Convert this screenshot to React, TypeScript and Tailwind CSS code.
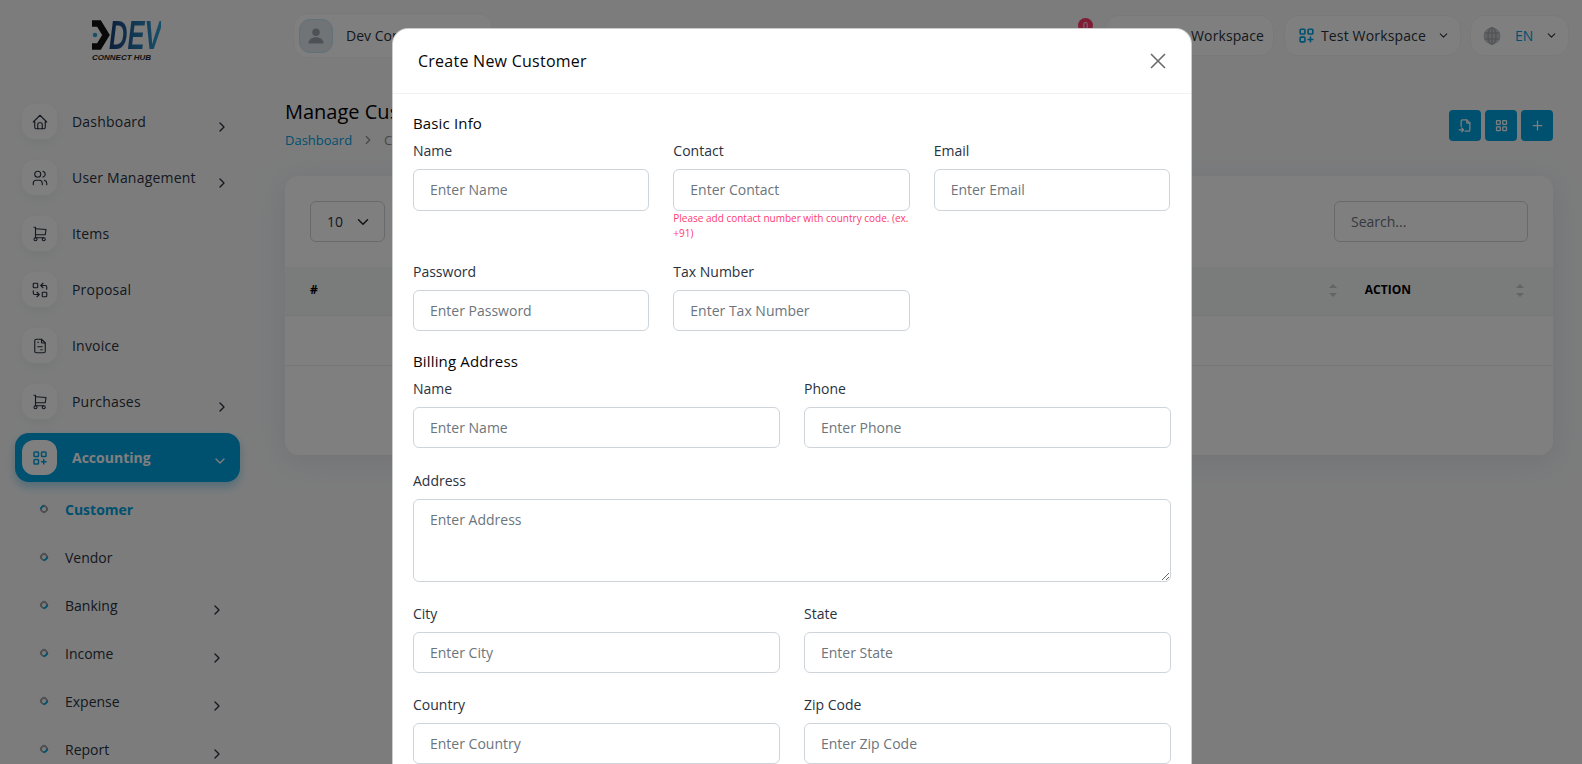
import { ReactNode } from 'react'
import {
  TbChevronDown,
  TbChevronRight,
  TbFileImport,
  TbFileInvoice,
  TbHome,
  TbLayoutGrid,
  TbLayoutGridAdd,
  TbPlus,
  TbReplace,
  TbShoppingCart,
  TbUsers,
} from 'react-icons/tb'

const mainMenu = [
  { label: 'Dashboard', icon: <TbHome />, arrow: true },
  { label: 'User Management', icon: <TbUsers />, arrow: true },
  { label: 'Items', icon: <TbShoppingCart />, arrow: false },
  { label: 'Proposal', icon: <TbReplace />, arrow: false },
  { label: 'Invoice', icon: <TbFileInvoice />, arrow: false },
  { label: 'Purchases', icon: <TbShoppingCart />, arrow: true },
]

const subMenu = [
  { label: 'Customer', active: true, arrow: false },
  { label: 'Vendor', active: false, arrow: false },
  { label: 'Banking', active: false, arrow: true },
  { label: 'Income', active: false, arrow: true },
  { label: 'Expense', active: false, arrow: true },
  { label: 'Report', active: false, arrow: true },
]

const Logo = () => (
  <div className="flex h-[42px] w-[72px] flex-col">
    <div className="flex h-[30px] items-start">
      <svg viewBox="0 0 20 30" className="h-[30px] w-[20px] shrink-0">
        <path d="M0 3.5H7L14 15L7 26.5H0" fill="none" stroke="#111" strokeWidth="6.5" />
        <circle cx="3" cy="15" r="2.2" fill="#2a9fd6" />
      </svg>
      <span className="-ml-[3px] origin-left scale-x-[0.64] bg-[linear-gradient(90deg,#1b3f78,#2f9fd4)] bg-clip-text text-[40px] leading-[30px] font-bold text-transparent italic [font-family:'Liberation_Sans',sans-serif]">
        DEV
      </span>
    </div>
    <span className="mt-[3px] text-[8px] leading-[9px] font-bold whitespace-nowrap text-[#222] italic [font-family:'Liberation_Sans',sans-serif]">
      CONNECT HUB
    </span>
  </div>
)

const Sidebar = () => (
  <aside className="flex w-[285px] shrink-0 flex-col">
    <div className="flex h-[104px] shrink-0 justify-start pt-[20px] pl-[92px]">
      <Logo />
    </div>
    <nav className="flex shrink-0 flex-col">
      {mainMenu.map((item) => (
        <div key={item.label} className="mb-[21px] flex h-[35px] shrink-0 items-start pl-[22px]">
          <span className="flex h-[35px] w-[35px] items-center justify-center rounded-[12px] bg-white text-[18px] text-[#293240] shadow-[0_4px_12px_rgba(0,0,0,0.05)] [&_svg]:stroke-[1.5]">
            {item.icon}
          </span>
          <span className="mt-[7px] ml-[15px] text-[14px] leading-[21px] font-medium tracking-[0.2px] text-[#293240]">
            {item.label}
          </span>
          {item.arrow && (
            <TbChevronRight className="absolute left-[214px] mt-[15px] text-[16px] text-[#293240]" />
          )}
        </div>
      ))}
      <div className="relative -mt-[7px] ml-[15px] flex h-[49px] w-[225px] shrink-0 items-center rounded-[14px] bg-[#00a0de] pl-[7px] shadow-[0_5px_10px_rgba(0,160,222,0.35)]">
        <span className="flex h-[35px] w-[35px] items-center justify-center rounded-[12px] bg-white text-[18px] text-[#00a0de]">
          <TbLayoutGridAdd />
        </span>
        <span className="ml-[15px] text-[14px] leading-[21px] font-bold text-white">Accounting</span>
        <TbChevronDown className="absolute top-[20px] left-[197px] text-[16px] text-white" />
      </div>
      <div className="mt-[3px] flex shrink-0 flex-col">
        {subMenu.map((item) => (
          <div key={item.label} className="relative flex h-[48px] shrink-0 items-center pl-[40px]">
            <span
              className={`-mt-[1px] h-[8px] w-[8px] rounded-full border-[2px] border-[#9b9ea3] border-b-[#00a0de] ${item.active ? 'rotate-[135deg]' : '-rotate-45'}`}
            />
            <span
              className={`ml-[17px] text-[14px] leading-[21px] ${item.active ? 'font-bold text-[#00a0de]' : 'font-medium text-[#293240]'}`}
            >
              {item.label}
            </span>
            {item.arrow && (
              <TbChevronRight className="absolute top-[21px] left-[209px] text-[16px] text-[#293240]" />
            )}
          </div>
        ))}
      </div>
    </nav>
  </aside>
)

const Pill = ({ className, children }: { className: string; children: ReactNode }) => (
  <div className={`flex h-[41px] items-center rounded-[14px] border border-[#f1f2f3] bg-white ${className}`}>
    {children}
  </div>
)

const Header = () => (
  <header className="flex h-[72px] shrink-0 items-start pt-[15px] pr-[13px] pl-[8px]">
    <div className="flex h-[45px] w-[200px] -translate-y-[2px] items-center rounded-[14px] border border-[#f1f2f3] bg-white pl-[5px]">
      <span className="flex h-[34px] w-[34px] items-center justify-center rounded-[11px] border border-[#bfe3f2] bg-[#e3e8ec]">
        <svg viewBox="0 0 24 24" className="h-[20px] w-[20px]">
          <circle cx="12" cy="7.5" r="4.5" fill="#9aa4ad" />
          <path d="M3 21c0-5 4-7.5 9-7.5s9 2.5 9 7.5z" fill="#9aa4ad" />
        </svg>
      </span>
      <span className="ml-[13px] text-[14px] leading-[21px] font-medium whitespace-nowrap text-[#293240]">
        Dev Connect
      </span>
    </div>
    <div className="relative ml-auto">
      <span className="absolute top-[3px] left-[-27px] flex h-[15px] w-[15px] items-center justify-center rounded-full bg-[#ff3a6e] text-[9px] font-medium text-white">
        0
      </span>
    </div>
    <Pill className="w-[169px] justify-end pr-[9px]">
      <span className="text-[14px] font-medium tracking-[0.1px] text-[#293240]">Workspace</span>
    </Pill>
    <Pill className="ml-[10px] w-[177px] pl-[12px]">
      <TbLayoutGridAdd className="text-[19px] text-[#00a0de]" />
      <span className="ml-[5px] text-[14px] font-medium tracking-[0.15px] whitespace-nowrap text-[#293240]">
        Test Workspace
      </span>
      <TbChevronDown className="ml-[11px] text-[13px] text-[#293240]" />
    </Pill>
    <Pill className="ml-[9px] w-[99px] pl-[12px]">
      <svg viewBox="0 0 18 18" className="h-[18px] w-[18px]">
        <circle cx="9" cy="9" r="8.5" fill="#c4c7cb" />
        <g fill="none" stroke="#9da1a6" strokeWidth="1">
          <ellipse cx="9" cy="9" rx="4" ry="8.5" />
          <path d="M9 .5v17M1.5 6h15M1.5 12h15" />
        </g>
      </svg>
      <span className="ml-[14px] text-[14px] font-medium text-[#00a0de]">EN</span>
      <TbChevronDown className="ml-[12px] text-[13px] text-[#293240]" />
    </Pill>
  </header>
)

const SortArrows = () => (
  <span className="flex flex-col items-center gap-[5px]">
    <span className="h-0 w-0 border-x-[4px] border-b-[4px] border-x-transparent border-b-[#c6c8cb]" />
    <span className="h-0 w-0 border-x-[4px] border-t-[4px] border-x-transparent border-t-[#c6c8cb]" />
  </span>
)

const ActionButton = ({ children }: { children: ReactNode }) => (
  <span className="flex h-[31px] w-[32px] items-center justify-center rounded-[4px] bg-[#00a0de] text-[15px] text-white">
    {children}
  </span>
)

const CustomerPage = () => (
  <main className="flex min-w-0 flex-1 flex-col">
    <Header />
    <div className="shrink-0 pr-[29px]">
      <div className="flex h-[104px] items-start justify-between">
        <div className="pt-[25px]">
          <h1 className="text-[20px] leading-[30px] font-medium whitespace-nowrap text-black">Manage Customer</h1>
          <p className="mt-[3px] flex items-center text-[13px] leading-[20px]">
            <span className="text-[#00a0de]">Dashboard</span>
            <TbChevronRight className="mx-[9px] text-[14px] text-[#8a8f96]" />
            <span className="text-[#8a8f96]">Customer</span>
          </p>
        </div>
        <div className="flex gap-[4px] pt-[38px]">
          <ActionButton>
            <TbFileImport />
          </ActionButton>
          <ActionButton>
            <TbLayoutGrid />
          </ActionButton>
          <ActionButton>
            <TbPlus />
          </ActionButton>
        </div>
      </div>
      <section className="h-[279px] rounded-[14px] bg-white shadow-[0_6px_30px_rgba(182,186,203,0.3)]">
        <div className="flex h-[91px] items-start justify-between pt-[25px] pr-[25px] pl-[25px]">
          <div className="flex h-[41px] w-[75px] items-center rounded-[6px] border border-[#ced4da] pl-[16px] text-[14px] text-[#293240]">
            10
            <TbChevronDown className="ml-[11px] text-[18px] text-[#222]" />
          </div>
          <div className="flex h-[41px] w-[194px] items-center rounded-[6px] border border-[#ced4da] pl-[16px] text-[14px] text-[#6b7280]">
            Search...
          </div>
        </div>
        <div className="flex h-[49px] items-center justify-between border-b border-[#eceef0] bg-[#f5f6f7] pr-[29px] pb-[2px] pl-[25px] text-[12px] leading-[18px] font-bold text-black">
          <span>#</span>
          <div className="flex items-center">
            <SortArrows />
            <span className="mr-[105px] ml-[28px]">ACTION</span>
            <SortArrows />
          </div>
        </div>
        <div className="h-[50px] border-b border-[#eceef0]" />
      </section>
    </div>
  </main>
)

const Field = ({
  label,
  placeholder,
  hint,
  className,
}: {
  label: string
  placeholder: string
  hint?: string
  className?: string
}) => (
  <div className={className}>
    <label className="mb-[8px] block text-[14px] leading-[21px] font-medium text-[#293240]">{label}</label>
    <input
      readOnly
      placeholder={placeholder}
      className="h-[41.5px] w-full rounded-[6px] border border-[#ced4da] bg-white px-[16px] text-[14px] outline-none placeholder:text-[#6c757d]"
    />
    {hint && <p className="mt-[0.5px] text-[10px] leading-[14.5px] text-[#ff3a6e]">{hint}</p>}
  </div>
)

const SectionTitle = ({ children }: { children: ReactNode }) => (
  <h6 className="text-[15px] leading-[21px] font-medium tracking-[0.15px] text-[#060606]">{children}</h6>
)

const CustomerModal = () => (
  <div className="absolute inset-0 overflow-hidden bg-[rgba(0,0,0,0.5)]">
    <div className="mt-[28px] ml-[392px] w-[800px] rounded-[16px] border border-black/20 bg-white">
      <div className="flex h-[65px] items-center justify-between border-b border-[#f1f1f1] pr-[25px] pl-[25px]">
        <h5 className="text-[16px] leading-[24px] font-medium tracking-[0.25px] text-[#060606]">
          Create New Customer
        </h5>
        <svg viewBox="0 0 16 16" className="h-[16px] w-[16px]">
          <path d="M1 1l14 14M15 1L1 15" fill="none" stroke="#6b6b6b" strokeWidth="1.6" />
        </svg>
      </div>
      <form className="px-[20px] pt-[19px] pb-[120px]">
        <SectionTitle>Basic Info</SectionTitle>
        <div className="mt-[6px] grid grid-cols-3 gap-x-[24px] gap-y-[20.5px] pr-[1px]">
          <Field label="Name" placeholder="Enter Name" />
          <Field
            label="Contact"
            placeholder="Enter Contact"
            hint="Please add contact number with country code. (ex. +91)"
          />
          <Field label="Email" placeholder="Enter Email" />
          <Field label="Password" placeholder="Enter Password" />
          <Field label="Tax Number" placeholder="Enter Tax Number" />
        </div>
        <div className="mt-[19.5px]">
          <SectionTitle>Billing Address</SectionTitle>
        </div>
        <div className="mt-[6px] grid grid-cols-2 gap-x-[24px] gap-y-[21px]">
          <Field label="Name" placeholder="Enter Name" />
          <Field label="Phone" placeholder="Enter Phone" />
          <div className="col-span-2 mt-[0.5px]">
            <label className="mb-[8px] block text-[14px] leading-[21px] font-medium text-[#293240]">Address</label>
            <textarea
              readOnly
              placeholder="Enter Address"
              className="block h-[83px] w-full rounded-[6px] border border-[#ced4da] bg-white px-[16px] py-[9px] text-[14px] outline-none placeholder:text-[#6c757d]"
            />
          </div>
          <Field label="City" placeholder="Enter City" />
          <Field label="State" placeholder="Enter State" />
          <Field label="Country" placeholder="Enter Country" className="-mt-[0.5px]" />
          <Field label="Zip Code" placeholder="Enter Zip Code" className="-mt-[0.5px]" />
        </div>
      </form>
    </div>
  </div>
)

const App = () => (
  <div className="relative flex h-[764px] overflow-hidden bg-[#f8f9fa] [font-family:'Open_Sans',sans-serif]">
    <Sidebar />
    <CustomerPage />
    <CustomerModal />
  </div>
)

export default App
